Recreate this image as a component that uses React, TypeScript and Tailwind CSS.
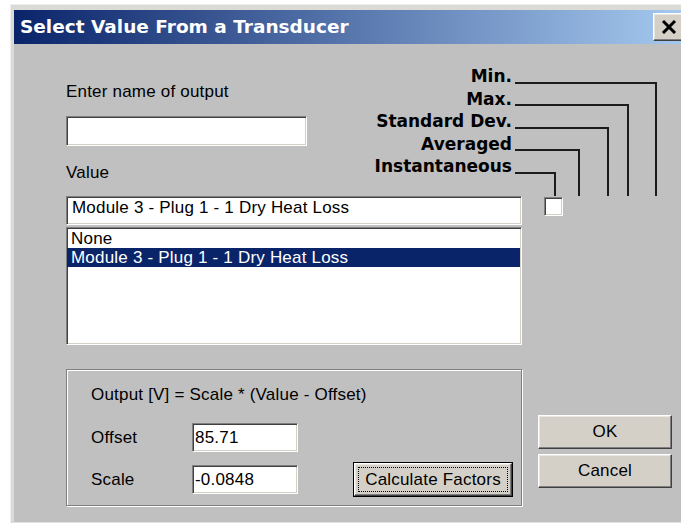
import React from 'react'

// ── Classic Win32 bevels ──────────────────────────────────────────────────────

const sunken =
  'border border-t-[#808080] border-l-[#808080] border-b-white border-r-white shadow-[inset_1px_1px_0_#404040,inset_-1px_-1px_0_#d4d0c8] bg-white'

const raised =
  'border border-t-white border-l-white border-b-[#404040] border-r-[#404040] shadow-[inset_-1px_-1px_0_#808080,inset_1px_1px_0_#e9e7e2] bg-[#d4d0c8]'

const STATS = ['Min.', 'Max.', 'Standard Dev.', 'Averaged', 'Instantaneous']

// x of each drop line, measured from the end of the label column
const DROPS = [144, 116, 96, 67, 43]

function TextBox({ value, className }: { value?: string; className: string }) {
  return (
    <div className={`${sunken} ${className} flex items-center pl-[2px] leading-[20px]`}>
      {value}
    </div>
  )
}

function Button({ label }: { label: string }) {
  return (
    <button className={`${raised} w-[134px] h-[34px] flex items-center justify-center leading-[20px]`}>
      {label}
    </button>
  )
}

// Bracket lines linking each statistic to the checkbox row
function StatLines() {
  return (
    <svg width="150" height="131" className="shrink-0">
      <g stroke="#1c1c1c" strokeWidth="2" fill="none">
        {DROPS.map((x, i) => {
          const y = [18, 40, 63, 85, 108][i]
          return <polyline key={i} points={`3,${y} ${x},${y} ${x},131`} />
        })}
      </g>
    </svg>
  )
}

export default function App() {
  return (
    <div className="w-[681px] h-[523px] overflow-hidden bg-white pl-[10px] pt-[4px] [font-family:'Liberation_Sans',Arial,sans-serif] text-[17px] tracking-[0.2px] text-black">
      <div className="w-[690px] h-[519px] flex flex-col bg-[#dcdad4] border-l border-t border-[#eeeeee] pl-[3px] pt-[5px]">

        {/* Title bar */}
        <div className="w-[675px] h-[34px] shrink-0 flex items-center bg-[linear-gradient(to_right,#0a246a,#a6caf0)]">
          <span className="pl-[6px] [font-family:'DejaVu_Sans',sans-serif] font-bold text-[18.5px] leading-[22px] tracking-normal text-white">
            Select Value From a Transducer
          </span>
          <button className={`${raised} ml-auto mr-[4px] w-[32px] h-[28px] flex items-center justify-center`}>
            <svg width="16" height="14" viewBox="0 0 16 14">
              <path d="M2 1 L14 13 M14 1 L2 13" stroke="#000" strokeWidth="3" />
            </svg>
          </button>
        </div>

        {/* Dialog body */}
        <div className="flex-1 bg-[#c0c0c0] pl-[52px] border-b border-[#e4e2dc]">

          {/* Name field + statistic labels */}
          <div className="flex h-[152px]">
            <div className="w-[241px] pt-[38px]">
              <div className="leading-[20px]">Enter name of output</div>
              <TextBox className="mt-[14px] w-[241px] h-[30px]" />
              <div className="mt-[17px] leading-[20px]">Value</div>
            </div>
            <div className="flex pt-[21px] ml-[45px]">
              <div className="w-[160px] flex flex-col text-right [font-family:'DejaVu_Sans',sans-serif] font-bold tracking-normal leading-[22.5px]">
                {STATS.map(s => (
                  <span key={s}>{s}</span>
                ))}
              </div>
              <StatLines />
            </div>
          </div>

          {/* Value selector */}
          <div className="flex">
            <div className="w-[456px]">
              <div className={`${sunken} h-[29px] pl-[5px] pt-[1px] leading-[20px]`}>
                Module 3 - Plug 1 - 1 Dry Heat Loss
              </div>
              <div className={`${sunken} mt-[2px] h-[118px] pt-[1px] pr-[1px]`}>
                <div className="h-[19px] leading-[19px] pl-[4px]">None</div>
                <div className="h-[19px] leading-[19px] pl-[4px] bg-[#0a246a] text-white">
                  Module 3 - Plug 1 - 1 Dry Heat Loss
                </div>
              </div>
            </div>
            <div className={`${sunken} ml-[22px] mt-[1px] w-[19px] h-[19px]`} />
          </div>

          {/* Scaling + dialog buttons */}
          <div className="flex mt-[24px]">
            <div className="w-[456px] h-[137px] border border-[#808080] shadow-[inset_1px_1px_0_#fff,1px_1px_0_#fff] pl-[24px] pr-[8px] pt-[15px]">
              <div className="leading-[20px]">Output [V] = Scale * (Value - Offset)</div>
              <div className="flex items-center mt-[18px]">
                <span className="w-[101px] leading-[20px]">Offset</span>
                <TextBox value="85.71" className="w-[106px] h-[29px]" />
              </div>
              <div className="flex items-center mt-[10px]">
                <span className="w-[101px] leading-[20px]">Scale</span>
                <TextBox value="-0.0848" className="w-[106px] h-[29px]" />
                <button className="ml-auto w-[160px] h-[35px] border border-black">
                  <div className={`${raised} w-full h-full flex items-center justify-center p-[3px]`}>
                    <span className="w-full h-full flex items-center justify-center border border-dotted border-black leading-[20px]">
                      Calculate Factors
                    </span>
                  </div>
                </button>
              </div>
            </div>
            <div className="ml-[16px] mt-[46px] flex flex-col gap-[5px]">
              <Button label="OK" />
              <Button label="Cancel" />
            </div>
          </div>
        </div>
      </div>
    </div>
  )
}
